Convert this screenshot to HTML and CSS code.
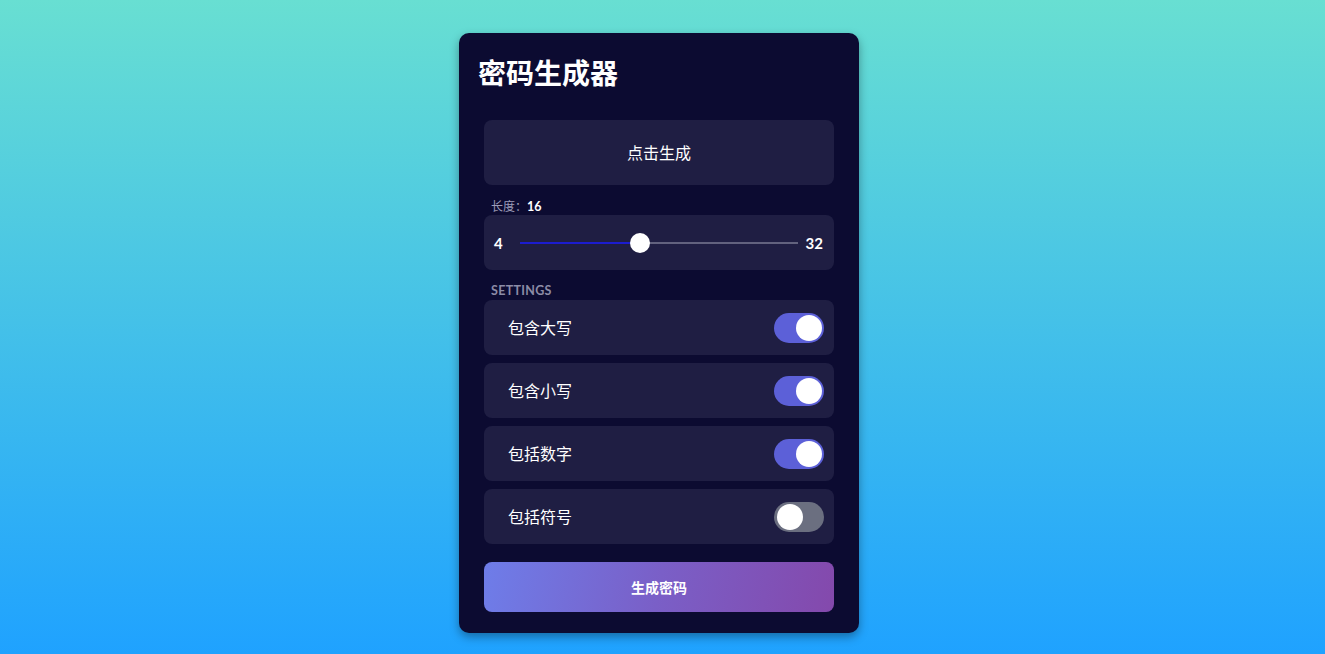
FILE: index.html
```html
<!DOCTYPE html>
<html lang="zh">
<head>
<meta charset="utf-8">
<title>密码生成器</title>
<link rel="stylesheet" href="styles.css">
</head>
<body>
<div class="page">
  <div class="card">
    <h1 class="title">密码生成器</h1>
    <div class="content">
      <div class="output">点击生成</div>
      <div class="label">长度：<span class="label-val">16</span></div>
      <div class="slider-box">
        <span class="num">4</span>
        <div class="track">
          <div class="fill" style="width:43%"></div>
          <div class="thumb" style="left:43%"></div>
        </div>
        <span class="num">32</span>
      </div>
      <div class="section">SETTINGS</div>
      <div class="rows">
        <div class="row"><span>包含大写</span><span class="toggle on"><span class="knob"></span></span></div>
        <div class="row"><span>包含小写</span><span class="toggle on"><span class="knob"></span></span></div>
        <div class="row"><span>包括数字</span><span class="toggle on"><span class="knob"></span></span></div>
        <div class="row"><span>包括符号</span><span class="toggle"><span class="knob"></span></span></div>
      </div>
      <button class="gen">生成密码</button>
    </div>
  </div>
</div>
</body>
</html>
```
FILE: styles.css
```css
* { box-sizing: border-box; }
html, body { margin: 0; padding: 0; }
body {
  height: 654px;
  overflow: hidden;
  background: linear-gradient(to bottom, #68dfd2 0%, #1fa2ff 100%);
  font-family: Lato, "Noto Sans CJK SC", sans-serif;
  color: #fff;
}
.page {
  display: flex;
  justify-content: center;
  padding-top: 33px;
  padding-right: 7px;
}
.card {
  width: 400px;
  background: #0c0b31;
  border-radius: 10px;
  padding: 20px 20px 21px;
  box-shadow: 0 4px 10px rgba(0,0,0,0.35);
}
.title {
  margin: 2px 0 0 -1px;
  font-size: 28px;
  line-height: 34px;
  font-weight: 700;
  font-family: "Noto Sans CJK SC", sans-serif;
  color: #fff;
}
.content {
  padding: 0 5px;
  margin-top: 31px;
  display: flex;
  flex-direction: column;
}
.output {
  height: 65px;
  background: #1f1e43;
  border-radius: 8px;
  display: flex;
  align-items: center;
  justify-content: center;
  padding-bottom: 2px;
  font-family: "Noto Sans CJK SC", sans-serif;
  font-size: 16px;
  color: #fff;
}
.label {
  margin-top: 12px;
  padding-left: 7px;
  height: 18px;
  line-height: 17px;
  font-size: 12px;
  color: #9c9cb8;
  font-family: "Noto Sans CJK SC", sans-serif;
}
.label-val {
  color: #fff;
  font-weight: 700;
  font-family: Lato, sans-serif;
  font-size: 12.5px;
}
.slider-box {
  height: 55px;
  background: #1f1e43;
  border-radius: 8px;
  display: flex;
  align-items: center;
  padding: 0 11px 0 10px;
}
.num {
  font-size: 15px;
  font-weight: 700;
  color: #fff;
  width: 26px;
}
.num:last-child { text-align: right; width: 25px; }
.track {
  flex: 1;
  height: 2px;
  background: #62627e;
  position: relative;
}
.fill {
  position: absolute;
  left: 0; top: 0; bottom: 0;
  background: #1c1ccf;
}
.thumb {
  position: absolute;
  top: 50%;
  width: 20px;
  height: 20px;
  margin: -10px 0 0 -10px;
  background: #fff;
  border-radius: 50%;
}
.section {
  margin-top: 13px;
  padding-left: 7px;
  height: 17px;
  line-height: 15px;
  font-size: 12.5px;
  font-weight: 700;
  color: #8c8ca6;
  letter-spacing: 0.3px;
}
.rows {
  display: flex;
  flex-direction: column;
  gap: 8px;
}
.row {
  height: 55px;
  background: #1f1e43;
  border-radius: 8px;
  display: flex;
  align-items: center;
  justify-content: space-between;
  padding: 0 10px 2px 24px;
  font-family: "Noto Sans CJK SC", sans-serif;
  font-size: 16px;
  color: #fff;
}
.toggle {
  width: 50px;
  height: 30px;
  border-radius: 15px;
  background: #6b6f80;
  position: relative;
  display: block;
  margin-top: 2px;
}
.toggle.on { background: #5c60d8; }
.knob {
  position: absolute;
  top: 2px;
  left: 3px;
  width: 26px;
  height: 26px;
  border-radius: 50%;
  background: #fff;
}
.toggle.on .knob { left: 22px; }
.gen {
  margin-top: 18px;
  height: 50px;
  border: none;
  border-radius: 8px;
  background: linear-gradient(100deg, #6e7de9 0%, #7a5fc7 50%, #8449ac 100%);
  color: #fff;
  font-family: "Noto Sans CJK SC", sans-serif;
  font-weight: 700;
  font-size: 14px;
  padding-bottom: 2px;
}
```
